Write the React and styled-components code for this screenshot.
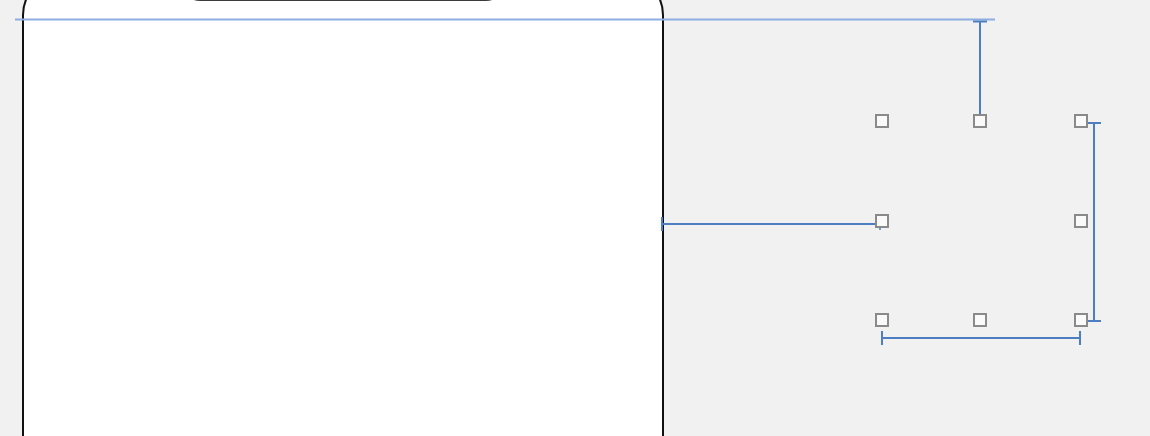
import styled, { createGlobalStyle } from "styled-components";

const GlobalStyle = createGlobalStyle`
  html, body {
    margin: 0;
    padding: 0;
    background: #f1f1f1;
    font-family: "Liberation Sans", Arial, sans-serif;
  }
`;

const Canvas = styled.div`
  position: relative;
  width: 1150px;
  height: 436px;
  overflow: hidden;
  background: #f1f1f1;
  padding-left: 22px;
  box-sizing: border-box;
`;

const PhoneFrame = styled.div`
  position: relative;
  width: 642px;
  height: 520px;
  margin-top: -25px;
  box-sizing: border-box;
  background: #ffffff;
  border: 2px solid #111;
  border-radius: 40px;
`;

const Notch = styled.div`
  position: absolute;
  left: 50%;
  top: 0;
  transform: translateX(-50%);
  width: 326px;
  height: 24px;
  background: #3a3a3a;
  border-radius: 0 0 20px 20px;
`;

const Overlay = styled.svg`
  position: absolute;
  left: 0;
  top: 0;
  pointer-events: none;
`;

const Handle = styled.div`
  position: absolute;
  left: ${(p) => p.$x - 7}px;
  top: ${(p) => p.$y - 7}px;
  width: 14px;
  height: 14px;
  box-sizing: border-box;
  border: 2px solid #8a8a8a;
  background: #fafafa;
`;

const handles = [
  [882, 121],
  [980, 121],
  [1081, 121],
  [882, 221],
  [1081, 221],
  [882, 320],
  [980, 320],
  [1081, 320],
];

const blue = "#4d7ec2";

function Guides() {
  return (
    <Overlay width="1150" height="436" viewBox="0 0 1150 436">
      {/* alignment guide */}
      <line x1="15" y1="19.5" x2="995" y2="19.5" stroke="#8eaee2" strokeWidth="2" />

      {/* top distance */}
      <line x1="973" y1="21.5" x2="987" y2="21.5" stroke={blue} strokeWidth="2" />
      <line x1="980" y1="21" x2="980" y2="121" stroke={blue} strokeWidth="2" />

      {/* left distance */}
      <line x1="663" y1="224" x2="880" y2="224" stroke={blue} strokeWidth="2" />
      <line x1="662" y1="217" x2="662" y2="231" stroke={blue} strokeWidth="2" />
      <line x1="880" y1="224" x2="880" y2="230" stroke={blue} strokeWidth="1.5" />

      {/* height */}
      <line x1="1088" y1="123" x2="1101" y2="123" stroke={blue} strokeWidth="2" />
      <line x1="1094" y1="123" x2="1094" y2="321" stroke={blue} strokeWidth="2" />
      <line x1="1088" y1="321" x2="1101" y2="321" stroke={blue} strokeWidth="2" />

      {/* width */}
      <line x1="882" y1="338" x2="1080" y2="338" stroke={blue} strokeWidth="2" />
      <line x1="882" y1="331" x2="882" y2="345" stroke={blue} strokeWidth="2" />
      <line x1="1080" y1="331" x2="1080" y2="345" stroke={blue} strokeWidth="2" />
    </Overlay>
  );
}

export default function App() {
  return (
    <>
      <GlobalStyle />
      <Canvas>
        <PhoneFrame>
          <Notch />
        </PhoneFrame>
        <Guides />
        {handles.map(([x, y]) => (
          <Handle key={`${x}-${y}`} $x={x} $y={y} />
        ))}
      </Canvas>
    </>
  );
}
